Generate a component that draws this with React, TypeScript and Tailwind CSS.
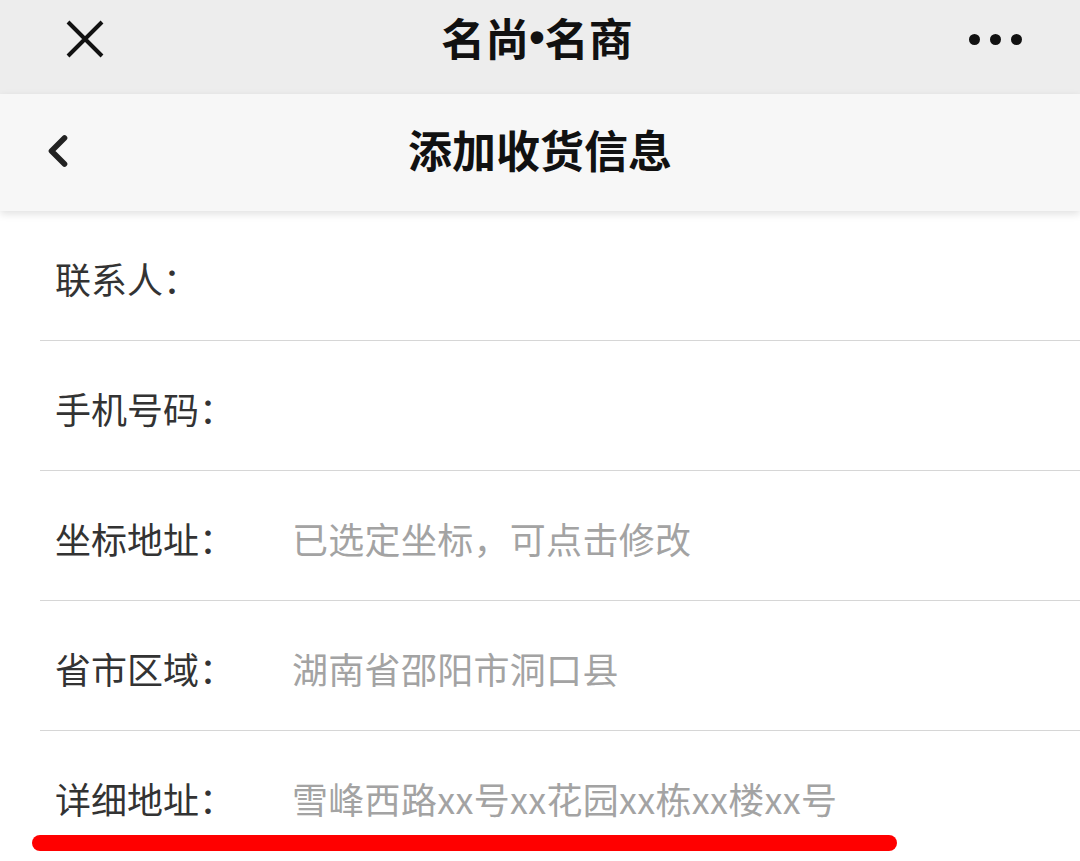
import { ChevronLeft } from "lucide-react";

const cjk = "font-['Noto_Sans_CJK_SC','Noto_Sans',sans-serif]";

type Field = {
  label: string;
  value?: string;
};

const fields: Field[] = [
  { label: "联系人" },
  { label: "手机号码" },
  { label: "坐标地址", value: "已选定坐标，可点击修改" },
  { label: "省市区域", value: "湖南省邵阳市洞口县" },
  { label: "详细地址", value: "雪峰西路xx号xx花园xx栋xx楼xx号" },
];

const FieldRow = ({ label, value, last }: Field & { last: boolean }) => {
  return (
    <div
      className={
        last
          ? "relative ml-[40px] flex h-[130px] items-center pl-[15px] pt-[4px]"
          : "ml-[40px] flex h-[130px] items-center border-b border-[#d6d6d6] pl-[15px] pt-[4px]"
      }
    >
      <span className="w-[237px] shrink-0 text-[36px] leading-none text-[#333333]">
        {label}：
      </span>
      {value && (
        <span className="text-[36px] leading-none tracking-[0.3px] text-[#a3a3a3]">{value}</span>
      )}
      {/* red highlight stroke drawn over the screenshot */}
      {last && (
        <div className="absolute left-[-8px] top-[104px] h-[16px] w-[865px] rounded-full bg-[#ff0000]" />
      )}
    </div>
  );
};

export default function App() {
  return (
    <div className={`${cjk} h-[861px] w-[1080px] overflow-hidden bg-white`}>
      {/* wechat top bar */}
      <div className="flex h-[94px] items-center justify-between bg-[#ededed] pb-[20px] pl-[65px] pr-[58px]">
        <svg width="40" height="40" viewBox="0 0 40 40" className="mt-[4px]">
          <path d="M3 3 L37 37 M37 3 L3 37" stroke="#111" strokeWidth="4" />
        </svg>
        <h1 className="flex items-center text-[44px] font-bold leading-none text-[#111]">
          名尚<span className="font-['Liberation_Sans',sans-serif]">•</span>名商
        </h1>
        <div className="mt-[4px] flex gap-[10px]">
          <span className="h-[11px] w-[11px] rounded-full bg-[#111]" />
          <span className="h-[11px] w-[11px] rounded-full bg-[#111]" />
          <span className="h-[11px] w-[11px] rounded-full bg-[#111]" />
        </div>
      </div>

      {/* page header */}
      <div className="relative flex h-[117px] items-center justify-center bg-[#f7f7f7] pb-[8px] shadow-[0_3px_8px_rgba(0,0,0,0.12)]">
        <ChevronLeft
          className="absolute left-[32px] top-[31px]"
          size={52}
          strokeWidth={2.6}
          color="#222"
        />
        <h2 className="text-[44px] font-bold leading-none text-[#111]">添加收货信息</h2>
      </div>

      <div>
        {fields.map((f, i) => (
          <FieldRow key={f.label} {...f} last={i === fields.length - 1} />
        ))}
      </div>
    </div>
  );
}
